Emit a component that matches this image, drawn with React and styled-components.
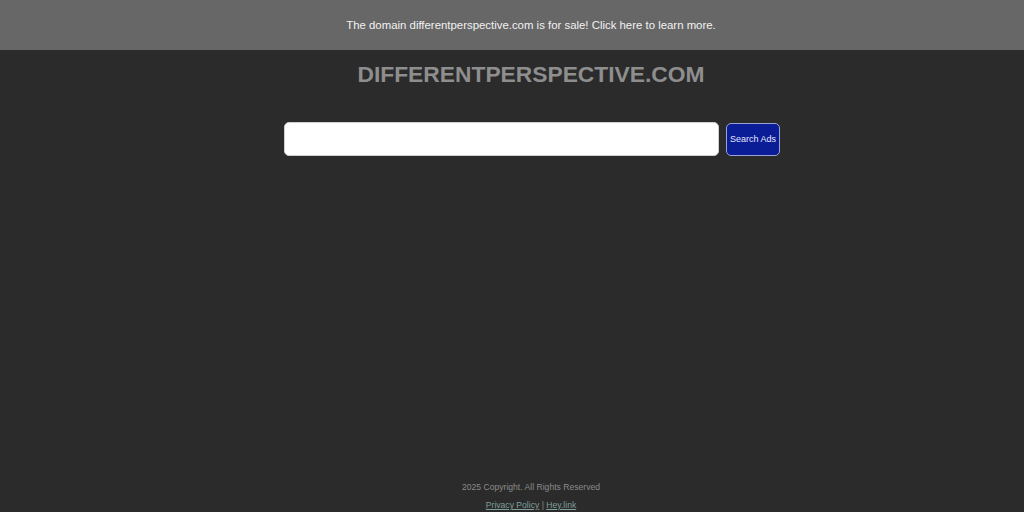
import React from "react";
import styled, { createGlobalStyle } from "styled-components";

const GlobalStyle = createGlobalStyle`
  html, body {
    margin: 0;
    padding: 0;
    background: #2b2b2b;
    font-family: "Liberation Sans", Arial, sans-serif;
  }
`;

const Page = styled.div`
  height: 512px;
  display: flex;
  flex-direction: column;
  background: #2b2b2b;
`;

const SaleBar = styled.a`
  height: 50px;
  display: flex;
  align-items: center;
  justify-content: center;
  background: #676767;
  color: #f2f2f2;
  font-size: 11.4px;
  text-decoration: none;
  padding-left: 38px;
`;

const Title = styled.h1`
  margin: 11px 0 0;
  text-align: center;
  font-size: 22.8px;
  font-weight: bold;
  color: #8e8e8e;
  padding-left: 38px;
`;

const SearchRow = styled.form`
  display: flex;
  justify-content: center;
  align-items: center;
  gap: 7px;
  margin-top: 34px;
  padding-left: 40px;
`;

const SearchInput = styled.input`
  width: 435px;
  height: 34px;
  box-sizing: border-box;
  border: 1px solid #cfcfcf;
  border-radius: 5px;
  background: #fff;
`;

const SearchButton = styled.button`
  width: 54px;
  height: 33px;
  box-sizing: border-box;
  border: 1px solid #9aa3d6;
  border-radius: 5px;
  background: #0a1c96;
  color: #e6e8ff;
  font-family: "Liberation Sans", Arial, sans-serif;
  font-size: 9px;
  padding: 0;
`;

const Footer = styled.footer`
  margin-top: auto;
  display: flex;
  flex-direction: column;
  align-items: center;
  gap: 8px;
  padding-bottom: 2px;
  padding-left: 38px;
  font-size: 8.6px;
  color: #8a8a8a;
`;

const Links = styled.div`
  color: #8a8a8a;
`;

const FooterLink = styled.a`
  color: #7f9f9a;
  text-decoration: underline;
`;

export default function App() {
  return (
    <>
      <GlobalStyle />
      <Page>
        <SaleBar href="#">
          The domain differentperspective.com is for sale! Click here to learn more.
        </SaleBar>
        <Title>DIFFERENTPERSPECTIVE.COM</Title>
        <SearchRow onSubmit={(e) => e.preventDefault()}>
          <SearchInput type="text" />
          <SearchButton type="submit">Search Ads</SearchButton>
        </SearchRow>
        <Footer>
          <div>2025 Copyright. All Rights Reserved</div>
          <Links>
            <FooterLink href="#">Privacy Policy</FooterLink> | <FooterLink href="#">Hey.link</FooterLink>
          </Links>
        </Footer>
      </Page>
    </>
  );
}
